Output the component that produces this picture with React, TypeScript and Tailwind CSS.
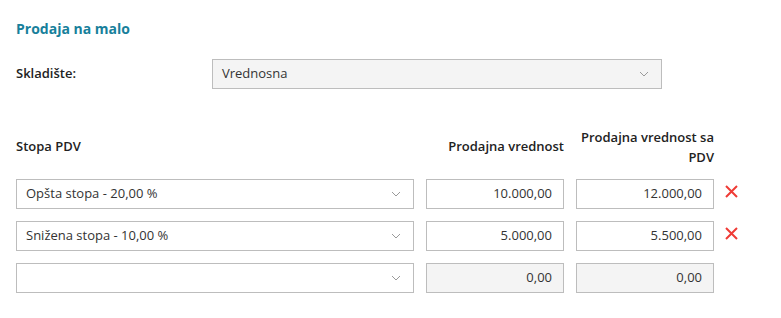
import React from "react";

const font = { fontFamily: '"Open Sans", "Noto Sans", sans-serif' };

function Chevron() {
  return (
    <svg width="10" height="6" viewBox="0 0 10 6" className="shrink-0">
      <path d="M1 1l4 4 4-4" fill="none" stroke="#9a9a9a" strokeWidth="1" />
    </svg>
  );
}

function RemoveIcon() {
  return (
    <svg width="13" height="13" viewBox="0 0 13 13" className="mt-[6px] -ml-[1px]">
      <path d="M1 1l11 11M12 1L1 12" fill="none" stroke="#ef3b36" strokeWidth="2" />
    </svg>
  );
}

function SelectBox({ value, gray = false }: { value: string; gray?: boolean }) {
  return (
    <div
      className={`flex h-[30px] items-center justify-between border border-[#bdbdbd] pl-[9px] pr-[12px] text-[13px] text-[#333] ${
        gray ? "bg-[#f4f4f4]" : "bg-white"
      }`}
    >
      <span>{value}</span>
      <Chevron />
    </div>
  );
}

function NumberBox({ value, disabled = false }: { value: string; disabled?: boolean }) {
  return (
    <div
      className={`flex h-[30px] items-center justify-end border border-[#bdbdbd] px-[11px] text-[13px] text-[#333] ${
        disabled ? "bg-[#f4f4f4]" : "bg-white"
      }`}
    >
      {value}
    </div>
  );
}

const rows = [
  { rate: "Opšta stopa - 20,00 %", net: "10.000,00", gross: "12.000,00", removable: true },
  { rate: "Snižena stopa - 10,00 %", net: "5.000,00", gross: "5.500,00", removable: true },
  { rate: "", net: "0,00", gross: "0,00", removable: false },
];

export default function App() {
  return (
    <div className="min-h-screen bg-white px-4 pt-[19px]" style={font}>
      {/* Header */}
      <h1 className="text-[14px] font-bold leading-5 text-[#17809b]">Prodaja na malo</h1>

      {/* Warehouse */}
      <div className="mt-5 flex items-center">
        <label className="w-[196px] text-[13px] font-semibold text-[#222]">Skladište:</label>
        <div className="w-[450px]">
          <SelectBox value="Vrednosna" gray />
        </div>
      </div>

      {/* VAT table */}
      <div className="mt-[38px] grid grid-cols-[398px_138px_138px_20px] gap-x-3 gap-y-3">
        <div className="self-center text-[13px] font-semibold text-[#222]">Stopa PDV</div>
        <div className="self-center text-right text-[13px] font-semibold text-[#222]">Prodajna vrednost</div>
        <div className="text-right text-[13px] font-semibold leading-5 text-[#222]">
          Prodajna vrednost sa PDV
        </div>
        <div />

        {rows.map((r, i) => (
          <React.Fragment key={i}>
            <SelectBox value={r.rate} />
            <NumberBox value={r.net} disabled={!r.removable} />
            <NumberBox value={r.gross} disabled={!r.removable} />
            <div>{r.removable && <RemoveIcon />}</div>
          </React.Fragment>
        ))}
      </div>
    </div>
  );
}
